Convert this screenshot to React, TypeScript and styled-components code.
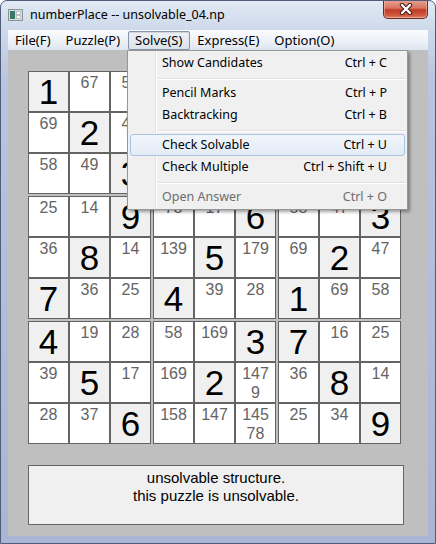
import React from "react";
import styled, { createGlobalStyle } from "styled-components";

const UI_FONT = `"Noto Sans", "Liberation Sans", sans-serif`;
const ARIAL = `"Liberation Sans", Arial, sans-serif`;

const GlobalStyle = createGlobalStyle`
  html, body { margin: 0; padding: 0; background: #ffffff; }
  body { font-family: ${UI_FONT}; }
`;

const Window = styled.div`
  position: relative;
  box-sizing: border-box;
  width: 436px;
  height: 544px;
  display: flex;
  flex-direction: column;
  padding: 0 7px 7px 7px;
  border: 1px solid #4f5d78;
  border-radius: 7px 7px 0 0;
  background: linear-gradient(
    to bottom,
    #e1e9f4 0px,
    #cdd9ea 29px,
    #b9c4df 80px,
    #aab5d6 100%
  );
  overflow: hidden;
`;

const TitleBar = styled.div`
  height: 29px;
  flex-shrink: 0;
  display: flex;
  align-items: flex-start;
`;

const AppIcon = styled.svg`
  flex-shrink: 0;
  margin-top: 8px;
`;

const Title = styled.span`
  margin-left: 7px;
  margin-top: 6px;
  font: 12.5px/16px ${UI_FONT};
  color: #000;
  white-space: nowrap;
`;

const CloseButton = styled.div`
  margin-left: auto;
  margin-top: -1px;
  width: 45px;
  height: 19px;
  box-sizing: border-box;
  border: 1px solid #6b2a20;
  border-top: none;
  border-radius: 0 0 5px 5px;
  background: linear-gradient(
    to bottom,
    #e8a493 0%,
    #d9735f 45%,
    #c23a26 55%,
    #cf5a40 85%,
    #e08a6c 100%
  );
  box-shadow: inset 0 0 0 1px rgba(255, 210, 200, 0.45);
  display: flex;
  align-items: center;
  justify-content: center;
`;

const MenuBar = styled.div`
  height: 20px;
  flex-shrink: 0;
  display: flex;
  align-items: center;
  background: linear-gradient(to bottom, #fbfcfe 0%, #eef2f8 50%, #dfe6f0 100%);
`;

const MenuTop = styled.div<{ $open?: boolean }>`
  height: 19px;
  box-sizing: border-box;
  padding: 0 7px 0 6px;
  display: flex;
  align-items: center;
  font: 13px/16px ${UI_FONT};
  color: #000;
  white-space: nowrap;
  border: 1px solid ${(p) => (p.$open ? "#8594ab" : "transparent")};
  border-radius: 2px;
  background: ${(p) =>
    p.$open ? "linear-gradient(to bottom, #eef1f5, #dde3eb)" : "transparent"};
  box-shadow: ${(p) => (p.$open ? "inset 0 1px 1px rgba(0,0,0,0.12)" : "none")};
`;

const Client = styled.div`
  flex: 1;
  background: #bfbfbf;
  padding: 21px 0 0 20px;
  display: flex;
  flex-direction: column;
  gap: 21px;
`;

const Board = styled.div`
  display: grid;
  grid-template-columns: repeat(3, 123px);
  grid-auto-rows: 123px;
  gap: 2px;
  width: 373px;
`;

const Box = styled.div`
  display: grid;
  grid-template-columns: repeat(3, 41px);
  grid-template-rows: repeat(3, 41px);
`;

const Cell = styled.div<{ $given?: boolean }>`
  box-sizing: border-box;
  border: 1px solid #646464;
  background: ${(p) => (p.$given ? "#f0f0f0" : "#ffffff")};
  display: flex;
  flex-direction: column;
  align-items: center;
  justify-content: ${(p) => (p.$given ? "center" : "flex-start")};
  font-family: ${ARIAL};
  overflow: hidden;
`;

const Given = styled.span`
  font-size: 35px;
  line-height: 37px;
  color: #000;
`;

const Cand = styled.span`
  font-size: 16px;
  line-height: 19px;
  color: #646464;
  text-align: center;
  &:first-child {
    margin-top: 1px;
  }
`;

const Message = styled.div`
  box-sizing: border-box;
  width: 376px;
  height: 60px;
  border: 1px solid #646464;
  background: #f0f0f0;
  padding-top: 3px;
  text-align: center;
  font: 15px/17.5px ${ARIAL};
  color: #000;
`;

const Dropdown = styled.div`
  position: absolute;
  left: 126px;
  top: 49px;
  width: 281px;
  box-sizing: border-box;
  border: 1px solid #979797;
  padding: 1px 1px;
  background: linear-gradient(
      to right,
      transparent 27px,
      #e2e3e3 27px,
      #e2e3e3 28px,
      #ffffff 28px,
      #ffffff 29px,
      transparent 29px
    ),
    #f0f0f0;
  box-shadow: 2px 2px 3px rgba(0, 0, 0, 0.35);
  display: flex;
  flex-direction: column;
`;

const DropItem = styled.div<{ $hot?: boolean; $disabled?: boolean }>`
  height: 22px;
  box-sizing: border-box;
  margin: 0 1px;
  padding: 0 17px 0 31px;
  display: flex;
  align-items: center;
  justify-content: space-between;
  font: 12.5px/16px ${UI_FONT};
  white-space: nowrap;
  color: ${(p) => (p.$disabled ? "#6d6d6d" : "#000")};
  border: 1px solid ${(p) => (p.$hot ? "#a9c3e3" : "transparent")};
  border-radius: 3px;
  background: ${(p) =>
    p.$hot ? "linear-gradient(to bottom, #f1f5fb, #e3ebf6)" : "transparent"};
`;

const Separator = styled.div`
  height: 8px;
  margin-left: 29px;
  position: relative;
  &::after {
    content: "";
    position: absolute;
    left: 0;
    right: 0;
    top: 4px;
    height: 1px;
    background: #e0e0e0;
    border-bottom: 1px solid #ffffff;
  }
`;

// "*" prefix marks a given digit
const rows: string[][] = [
  ["*1", "67", "58", "238", "36", "27", "*4", "39", "78"],
  ["69", "*2", "47", "347", "*8", "147", "69", "*5", "17"],
  ["58", "49", "*3", "*9", "47", "12", "28", "17", "*6"],
  ["25", "14", "*9", "78", "17", "*6", "58", "47", "*3"],
  ["36", "*8", "14", "139", "*5", "179", "69", "*2", "47"],
  ["*7", "36", "25", "*4", "39", "28", "*1", "69", "58"],
  ["*4", "19", "28", "58", "169", "*3", "*7", "16", "25"],
  ["39", "*5", "17", "169", "*2", "1479", "36", "*8", "14"],
  ["28", "37", "*6", "158", "147", "14578", "25", "34", "*9"],
];

function chunk(s: string): string[] {
  const out: string[] = [];
  for (let i = 0; i < s.length; i += 3) out.push(s.slice(i, i + 3));
  return out;
}

function SudokuCell({ value }: { value: string }) {
  if (value.startsWith("*")) {
    return (
      <Cell $given>
        <Given>{value.slice(1)}</Given>
      </Cell>
    );
  }
  return (
    <Cell>
      {chunk(value).map((line, i) => (
        <Cand key={i}>{line}</Cand>
      ))}
    </Cell>
  );
}

const menuTops = ["File(F)", "Puzzle(P)", "Solve(S)", "Express(E)", "Option(O)"];

export default function App() {
  const boxes: string[][] = [];
  for (let b = 0; b < 9; b++) {
    const br = Math.floor(b / 3) * 3;
    const bc = (b % 3) * 3;
    const cells: string[] = [];
    for (let r = 0; r < 3; r++) for (let c = 0; c < 3; c++) cells.push(rows[br + r][bc + c]);
    boxes.push(cells);
  }
  return (
    <>
      <GlobalStyle />
      <Window>
        <TitleBar>
          <AppIcon width="15" height="12" viewBox="0 0 15 12">
            <rect x="0.5" y="0.5" width="14" height="11" fill="#d5dbdc" stroke="#8a9597" />
            <rect x="2" y="2" width="5" height="8" fill="#3e7569" />
            <rect x="8.5" y="2.5" width="4" height="3" fill="#f4f6f6" stroke="#a7b0b2" strokeWidth="0.6" />
            <rect x="8.5" y="6.5" width="4" height="3" fill="#f4f6f6" stroke="#a7b0b2" strokeWidth="0.6" />
          </AppIcon>
          <Title>numberPlace -- unsolvable_04.np</Title>
          <CloseButton>
            <svg width="14" height="12" viewBox="0 0 14 12">
              <path d="M3 2 L11 10 M11 2 L3 10" stroke="#4a1c14" strokeWidth="4.4" strokeLinecap="round" />
              <path d="M3 2 L11 10 M11 2 L3 10" stroke="#ffffff" strokeWidth="2.4" strokeLinecap="round" />
            </svg>
          </CloseButton>
        </TitleBar>
        <MenuBar>
          {menuTops.map((m) => (
            <MenuTop key={m} $open={m === "Solve(S)"}>
              {m}
            </MenuTop>
          ))}
        </MenuBar>
        <Client>
          <Board>
            {boxes.map((cells, i) => (
              <Box key={i}>
                {cells.map((v, j) => (
                  <SudokuCell key={j} value={v} />
                ))}
              </Box>
            ))}
          </Board>
          <Message>
            unsolvable structure.
            <br />
            this puzzle is unsolvable.
          </Message>
        </Client>
        <Dropdown>
          <DropItem>
            <span>Show Candidates</span>
            <span>Ctrl + C</span>
          </DropItem>
          <Separator />
          <DropItem>
            <span>Pencil Marks</span>
            <span>Ctrl + P</span>
          </DropItem>
          <DropItem>
            <span>Backtracking</span>
            <span>Ctrl + B</span>
          </DropItem>
          <Separator />
          <DropItem $hot>
            <span>Check Solvable</span>
            <span>Ctrl + U</span>
          </DropItem>
          <DropItem>
            <span>Check Multiple</span>
            <span>Ctrl + Shift + U</span>
          </DropItem>
          <Separator />
          <DropItem $disabled>
            <span>Open Answer</span>
            <span>Ctrl + O</span>
          </DropItem>
        </Dropdown>
      </Window>
    </>
  );
}
